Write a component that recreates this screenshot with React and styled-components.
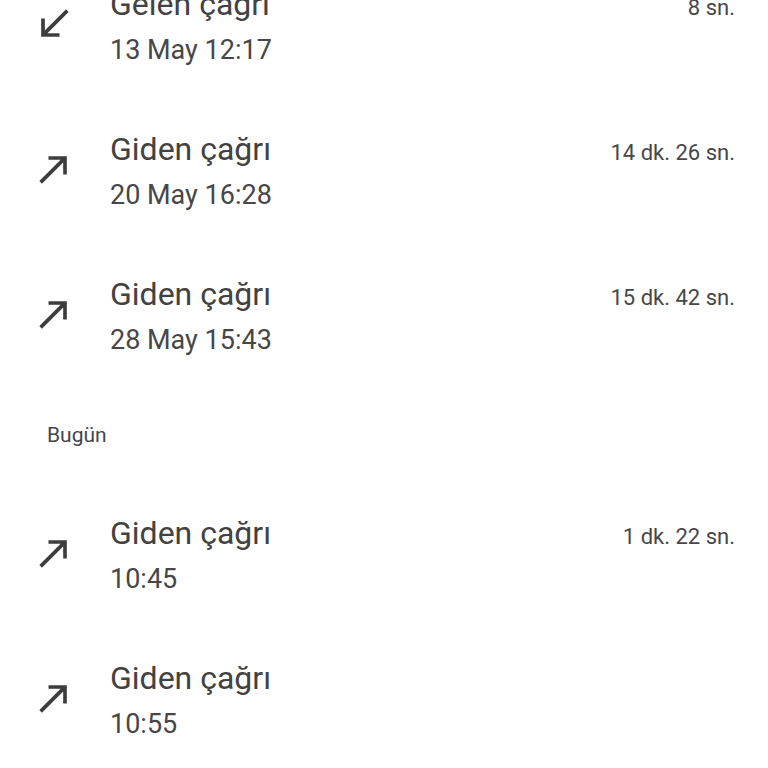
import React from 'react';
import styled, { createGlobalStyle } from 'styled-components';

const GlobalStyle = createGlobalStyle`
    html, body {
        margin: 0;
        padding: 0;
        background: #fff;
        overflow: hidden;
    }
    body {
        font-family: Roboto, "Noto Sans", sans-serif;
        color: #424242;
    }
`;

const Page = styled.div`
    width: 768px;
    height: 768px;
    overflow: hidden;
    background: #fff;
`;

const List = styled.div`
    margin-top: -46px;
    display: flex;
    flex-direction: column;
`;

const Row = styled.div`
    height: 145px;
    display: flex;
    align-items: center;
    padding: 0 33px 0 32px;
    box-sizing: border-box;
`;

const IconBox = styled.div`
    width: 44px;
    height: 44px;
    flex: none;
    margin-right: 34px;
    margin-bottom: 5px;
    color: #3d3d3d;
    svg {
        display: block;
        width: 44px;
        height: 44px;
    }
`;

const Body = styled.div`
    flex: 1;
    display: flex;
    flex-direction: column;
    margin-bottom: 3px;
`;

const TopLine = styled.div`
    display: flex;
    justify-content: space-between;
    align-items: baseline;
`;

const Title = styled.div`
    font-size: 32px;
    line-height: 40px;
    color: #424242;
`;

const Duration = styled.div`
    font-size: 22px;
    line-height: 26px;
    color: #474747;
`;

const Sub = styled.div`
    margin-top: 9px;
    font-size: 27px;
    line-height: 34px;
    color: #474747;
`;

const Header = styled.div`
    height: 94px;
    box-sizing: border-box;
    padding: 34px 0 0 47px;
    font-size: 21px;
    line-height: 24px;
    color: #464646;
`;

const OutIcon = () => (
    <svg viewBox="0 0 24 24" fill="currentColor">
        <path d="M9 5v2h6.59L4 18.59 5.41 20 17 8.41V15h2V5z" />
    </svg>
);

const InIcon = () => (
    <svg viewBox="0 0 24 24" fill="currentColor">
        <path d="M20 5.41L18.59 4 7 15.59V9H5v10h10v-2H8.41z" />
    </svg>
);

function CallRow({ incoming, when, duration }) {
    return (
        <Row>
            <IconBox>{incoming ? <InIcon /> : <OutIcon />}</IconBox>
            <Body>
                <TopLine>
                    <Title>{incoming ? 'Gelen çağrı' : 'Giden çağrı'}</Title>
                    <Duration>{duration}</Duration>
                </TopLine>
                <Sub>{when}</Sub>
            </Body>
        </Row>
    );
}

const earlier = [
    { incoming: true, when: '13 May 12:17', duration: '8 sn.' },
    { incoming: false, when: '20 May 16:28', duration: '14 dk. 26 sn.' },
    { incoming: false, when: '28 May 15:43', duration: '15 dk. 42 sn.' },
];

const today = [
    { incoming: false, when: '10:45', duration: '1 dk. 22 sn.' },
    { incoming: false, when: '10:55', duration: '' },
];

export default function App() {
    return (
        <Page>
            <GlobalStyle />
            <List>
                {earlier.map((c, i) => <CallRow key={'e' + i} {...c} />)}
                <Header>Bugün</Header>
                {today.map((c, i) => <CallRow key={'t' + i} {...c} />)}
            </List>
        </Page>
    );
}
